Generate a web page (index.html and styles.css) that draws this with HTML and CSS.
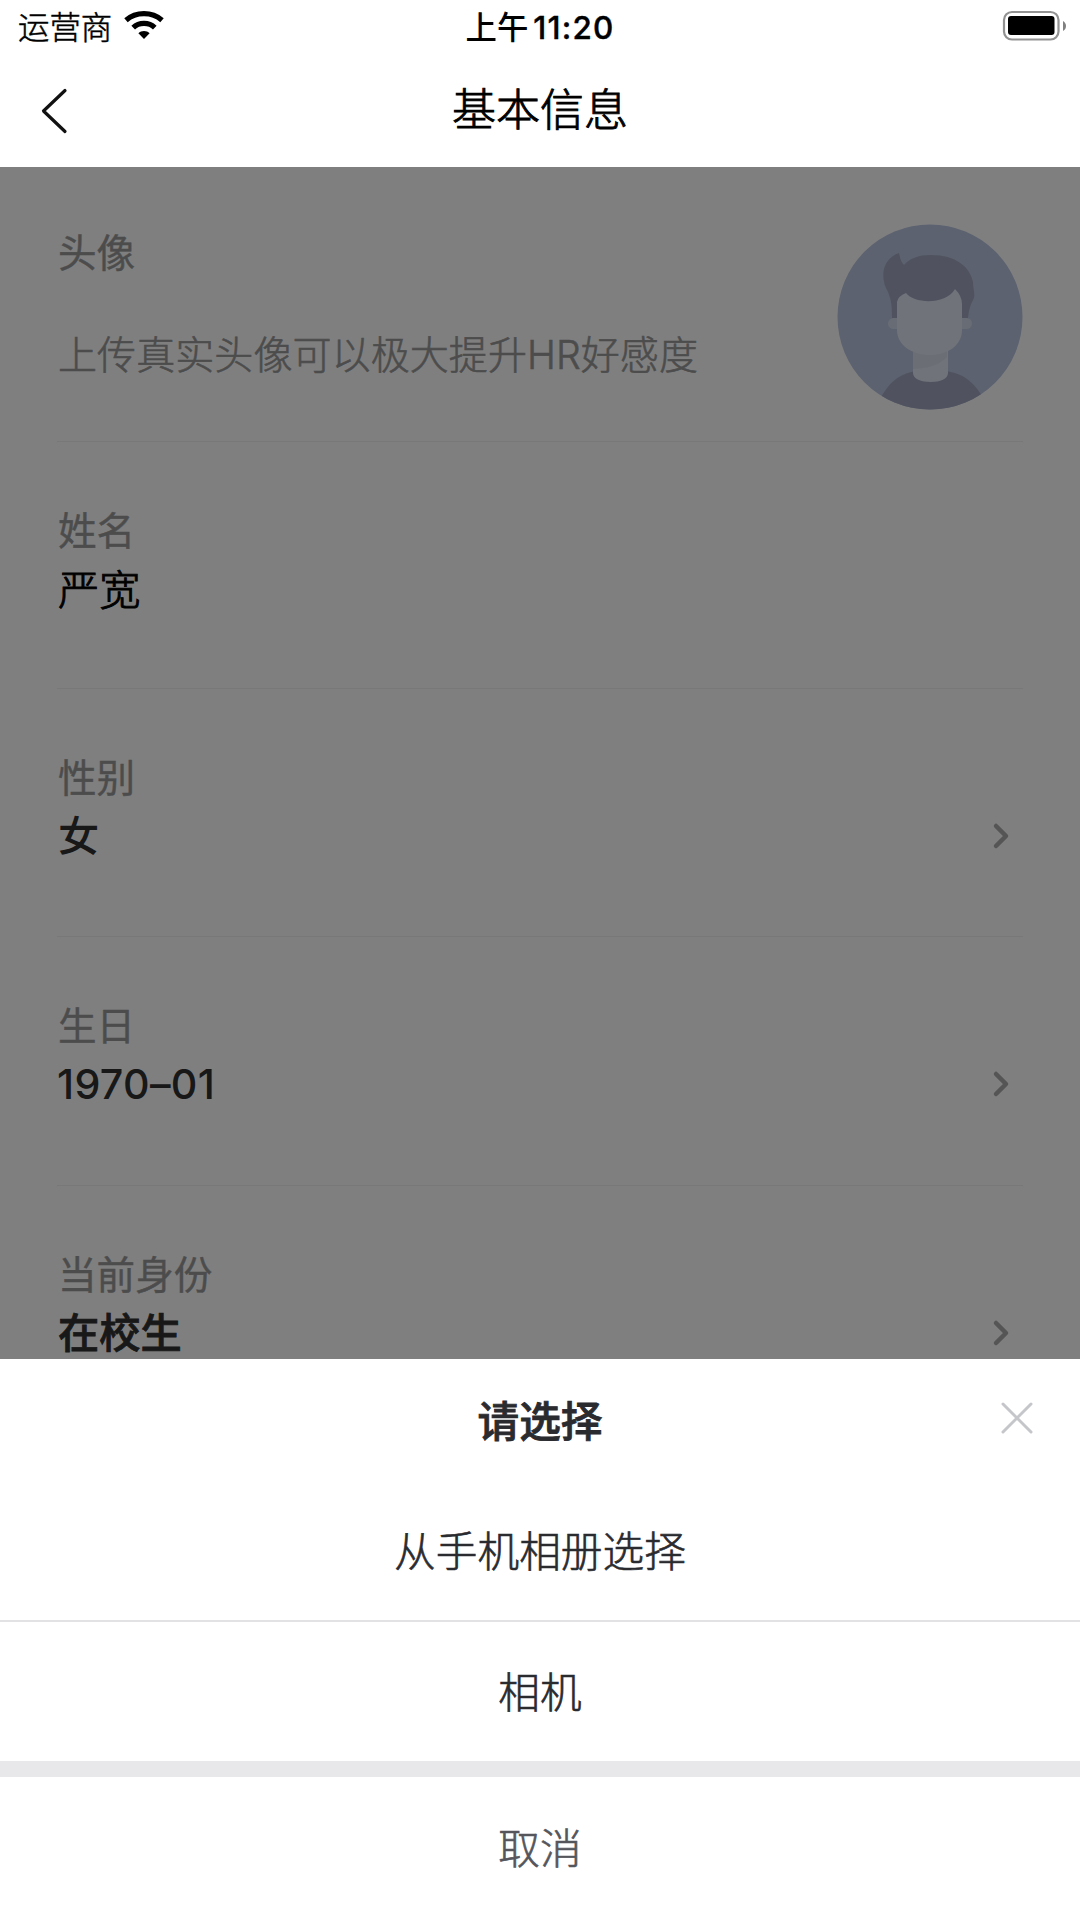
FILE: index.html
```html
<!DOCTYPE html>
<html lang="zh-CN">
<head>
<meta charset="utf-8">
<title>基本信息</title>
<link rel="stylesheet" href="styles.css">
</head>
<body>
<div class="screen">
  <header class="top">
    <div class="status">
      <div class="status-left">
        <span>运营商</span>
        <svg class="wifi" width="40" height="30" viewBox="0 0 40 30">
          <g fill="none" stroke="#000" stroke-width="5.2">
            <path d="M2 10.2C12 1.400 28 1.400 38 10.200"/>
            <path d="M9.200 17.600C15 12 25 12 30.800 17.600"/>
          </g>
          <path d="M14.400 23.300C17.300 20.300 22.700 20.300 25.600 23.300L20 29Z"/>
        </svg>
      </div>
      <span class="clock">上午<span class="digits">11:20</span></span>
      <svg class="battery" width="66" height="32" viewBox="0 0 66 32">
        <rect x="2" y="2" width="54.500" height="27.500" rx="8" fill="none" stroke="#929292" stroke-width="2.200"/>
        <rect x="6" y="6" width="46.500" height="19" rx="3"/>
        <path d="M61 11C65 13 65 19 61 21Z" fill="#808080"/>
      </svg>
    </div>
    <div class="nav">
      <svg class="back" width="30" height="48" viewBox="0 0 30 48" fill="none" stroke="#111" stroke-width="3.200" stroke-linecap="round" stroke-linejoin="round"><path d="M25 3.500L3.500 24L25 44.500"/></svg>
      <h1>基本信息</h1>
    </div>
  </header>

  <main class="content">
    <section class="row photo-row">
      <div>
        <div class="label">头像</div>
        <div class="hint">上传真实头像可以极大提升HR好感度</div>
      </div>
      <svg class="avatar" width="186" height="186" viewBox="0 0 186 186">
        <defs><clipPath id="disc"><circle cx="93" cy="93" r="92.500"/></clipPath></defs>
        <g clip-path="url(#disc)">
          <rect width="186" height="186" fill="#b8c4e0"/>
          <path d="M40 180C52 158 62 146 93 146C126 146 136 156 150 180V186H40Z" fill="#a0a6be"/>
          <path d="M76 124H111V149C111 155 103 158 94 158C84 158 76 155 76 149Z" fill="#e0e6f4"/>
          <path d="M76 127H110V133C101 142 90 144 76 145Z" fill="#d8dcea"/>
          <rect x="51" y="94" width="84" height="11" rx="5.500" fill="#d0d8ea"/>
          <path d="M55 94C55 80 54 76 51 68C46 60 45 49 48 42C51 35 56 31 62 29C63 34 64 38 67 41C73 34 82 31 94 31C119 31 133 43 136 58C136 64 138 69 137 74C134 80 132 84 131 94Z" fill="#a0a6be"/>
          <path d="M60 78Q61 72 69 69C77 80 109 81 118 65Q125 72 125 80V106C125 121 111 131 93 131C75 131 60 121 60 106Z" fill="#e0e6f4"/>
        </g>
      </svg>
    </section>

    <section class="row name-row">
      <div class="label">姓名</div>
      <div class="value value-plain">严宽</div>
    </section>

    <section class="row">
      <div class="label">性别</div>
      <div class="value">女<svg class="chevron" width="18" height="28" viewBox="0 0 18 28"><path d="M4 4L14 14L4 24"/></svg></div>
    </section>

    <section class="row">
      <div class="label">生日</div>
      <div class="value value-date">1970–01<svg class="chevron" width="18" height="28" viewBox="0 0 18 28"><path d="M4 4L14 14L4 24"/></svg></div>
    </section>

    <section class="row">
      <div class="label">当前身份</div>
      <div class="value value-bold">在校生<svg class="chevron" width="18" height="28" viewBox="0 0 18 28"><path d="M4 4L14 14L4 24"/></svg></div>
    </section>
    <div class="mask"></div>
  </main>

  <div class="sheet">
    <div class="sheet-title">
      <h2>请选择</h2>
      <svg class="close" width="34" height="34" viewBox="0 0 34 34" fill="none" stroke="#c5c6ca" stroke-width="3" stroke-linecap="round"><path d="M3 3L31 31M31 3L3 31"/></svg>
    </div>
    <div class="option">从手机相册选择</div>
    <div class="option option-last">相机</div>
    <div class="cancel">取消</div>
  </div>
</div>
</body>
</html>
```
FILE: styles.css
```css
* {
  box-sizing: border-box;
}

body {
  margin: 0;
  background: #fff;
  font-family: Inter, "Noto Sans CJK SC", sans-serif;
  color: #000;
}

h1,
h2 {
  margin: 0;
}

svg {
  display: block;
}

.screen {
  display: flex;
  flex-direction: column;
  width: 1080px;
  height: 1920px;
  overflow: hidden;
}

.top {
  flex: none;
  height: 167px;
}

.status {
  display: grid;
  grid-template-columns: 1fr auto 1fr;
  align-items: center;
  height: 54px;
  padding: 0 12px 0 18px;
  font-size: 31.4px;
  line-height: 54px;
}

.status-left {
  display: flex;
  align-items: center;
  gap: 12px;
  padding-top: 1px;
  font-weight: 300;
  -webkit-text-stroke: 0.5px;
}

.wifi {
  margin-bottom: 6px;
}

.clock {
  padding: 1px 6px 0 0;
  font-weight: 500;
}

.digits {
  margin-left: 5px;
  font-weight: 500;
  letter-spacing: 1.2px;
  -webkit-text-stroke: 0.4px;
}

.battery {
  justify-self: end;
  margin-bottom: 3px;
}

.nav {
  display: grid;
  grid-template-columns: 1fr auto 1fr;
  align-items: center;
  height: 110px;
  padding: 0 40px;
}

.nav h1 {
  padding-top: 2px;
  font-size: 44px;
  font-weight: 300;
  line-height: 60px;
  -webkit-text-stroke: 0.9px;
}

.back {
  margin-top: 4px;
}

.content {
  position: relative;
  flex: none;
  height: 1192px;
  padding: 0 57px;
  overflow: hidden;
}

.mask {
  position: absolute;
  inset: 0;
  background: rgba(0, 0, 0, 0.5);
}

.row {
  height: 248.5px;
  padding-top: 64px;
  border-bottom: 1px solid #f0f0f0;
}

.name-row {
  height: 247px;
}

.photo-row {
  display: flex;
  justify-content: space-between;
  height: 274.500px;
  padding-top: 57px;
}

.label {
  padding-left: 1px;
  color: #999;
  font-size: 38.600px;
  font-weight: 400;
  line-height: 50px;
  -webkit-text-stroke: 0.4px;
}

.photo-row .label {
  line-height: 58px;
}

.hint {
  margin-top: 43px;
  padding-left: 1px;
  color: #999;
  font-size: 39px;
  font-weight: 300;
  letter-spacing: 0.08px;
  line-height: 60px;
  -webkit-text-stroke: 0.6px;
}

.value {
  display: flex;
  align-items: center;
  justify-content: space-between;
  margin-top: 3px;
  padding: 0 13px 0 1px;
  color: #303030;
  font-size: 41.200px;
  font-weight: 500;
  line-height: 60px;
}

.value-plain {
  padding-top: 1px;
  color: #000;
  font-weight: 300;
  -webkit-text-stroke: 0.9px;
}

.value-date {
  padding-left: 0;
  letter-spacing: 0.3px;
}

.value-bold {
  font-weight: 500;
  -webkit-text-stroke: 0.8px;
}

.chevron {
  fill: none;
  stroke: #aaa;
  stroke-width: 4.500px;
  stroke-linecap: round;
  stroke-linejoin: round;
}

.sheet {
  display: flex;
  flex: 1;
  flex-direction: column;
  color: #2a2b2f;
  font-size: 41.700px;
  text-align: center;
}

.sheet-title {
  display: grid;
  grid-template-columns: 1fr auto 1fr;
  align-items: center;
  height: 122px;
  padding: 0 46px 2px;
}

.sheet-title h2 {
  grid-column: 2;
  font-size: inherit;
  font-weight: 500;
  -webkit-text-stroke: 0.8px;
}

.close {
  justify-self: end;
  margin-bottom: 2px;
}

.option {
  height: 141px;
  border-bottom: 2px solid #e2e2e4;
  font-weight: 300;
  line-height: 142px;
  -webkit-text-stroke: 0.6px;
}

.option-last {
  height: 155px;
  border-bottom: 16px solid #e8e8ea;
}

.cancel {
  color: #55565b;
  font-weight: 300;
  line-height: 144px;
  -webkit-text-stroke: 0.6px;
}
```
